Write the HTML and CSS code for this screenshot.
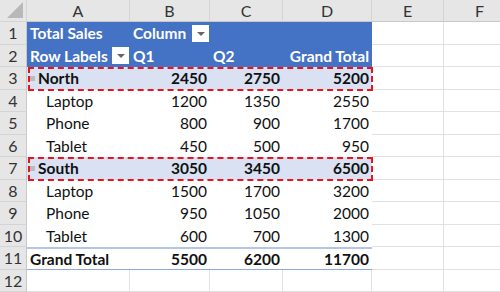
FILE: index.html
```html
<!DOCTYPE html>
<html>
  <head>
    <title>Sales Pivot</title>
    <link rel="stylesheet" href="styles.css">
  </head>
  <body>
    <div class="sheet">
      <div class="row head">
        <div class="corner"><span class="tri"></span></div>
        <div class="colhead">A</div>
        <div class="colhead">B</div>
        <div class="colhead">C</div>
        <div class="colhead">D</div>
        <div class="colhead">E</div>
        <div class="colhead">F</div>
      </div>

      <div class="row">
        <div class="num">1</div>
        <div class="cell blue">Total Sales</div>
        <div class="cell blue">Column <span class="drop"></span></div>
        <div class="cell blue"></div>
        <div class="cell blue"></div>
        <div class="cell grid"></div>
        <div class="cell grid"></div>
      </div>
      <div class="row">
        <div class="num">2</div>
        <div class="cell blue">Row Labels <span class="drop"></span></div>
        <div class="cell blue">Q1</div>
        <div class="cell blue">Q2</div>
        <div class="cell blue right">Grand Total</div>
        <div class="cell grid"></div>
        <div class="cell grid"></div>
      </div>

      <div class="row">
        <div class="num">3</div>
        <div class="cell band label"><span class="minus"></span>North</div>
        <div class="cell band right bold">2450</div>
        <div class="cell band right bold">2750</div>
        <div class="cell band right bold">5200</div>
        <div class="cell grid"></div>
        <div class="cell grid"></div>
        <div class="mark"></div>
      </div>
      <div class="row">
        <div class="num">4</div>
        <div class="cell item">Laptop</div>
        <div class="cell right">1200</div>
        <div class="cell right">1350</div>
        <div class="cell right">2550</div>
        <div class="cell grid"></div>
        <div class="cell grid"></div>
      </div>
      <div class="row">
        <div class="num">5</div>
        <div class="cell item">Phone</div>
        <div class="cell right">800</div>
        <div class="cell right">900</div>
        <div class="cell right">1700</div>
        <div class="cell grid"></div>
        <div class="cell grid"></div>
      </div>
      <div class="row">
        <div class="num">6</div>
        <div class="cell item">Tablet</div>
        <div class="cell right">450</div>
        <div class="cell right">500</div>
        <div class="cell right">950</div>
        <div class="cell grid"></div>
        <div class="cell grid"></div>
      </div>

      <div class="row">
        <div class="num">7</div>
        <div class="cell band label"><span class="minus"></span>South</div>
        <div class="cell band right bold">3050</div>
        <div class="cell band right bold">3450</div>
        <div class="cell band right bold">6500</div>
        <div class="cell grid"></div>
        <div class="cell grid"></div>
        <div class="mark"></div>
      </div>
      <div class="row">
        <div class="num">8</div>
        <div class="cell item">Laptop</div>
        <div class="cell right">1500</div>
        <div class="cell right">1700</div>
        <div class="cell right">3200</div>
        <div class="cell grid"></div>
        <div class="cell grid"></div>
      </div>
      <div class="row">
        <div class="num">9</div>
        <div class="cell item">Phone</div>
        <div class="cell right">950</div>
        <div class="cell right">1050</div>
        <div class="cell right">2000</div>
        <div class="cell grid"></div>
        <div class="cell grid"></div>
      </div>
      <div class="row">
        <div class="num">10</div>
        <div class="cell item">Tablet</div>
        <div class="cell right">600</div>
        <div class="cell right">700</div>
        <div class="cell right">1300</div>
        <div class="cell grid"></div>
        <div class="cell grid"></div>
      </div>

      <div class="row">
        <div class="num">11</div>
        <div class="cell total bold">Grand Total</div>
        <div class="cell total right bold">5500</div>
        <div class="cell total right bold">6200</div>
        <div class="cell total right bold">11700</div>
        <div class="cell grid"></div>
        <div class="cell grid"></div>
      </div>
      <div class="row">
        <div class="num">12</div>
        <div class="cell grid"></div>
        <div class="cell grid"></div>
        <div class="cell grid"></div>
        <div class="cell grid"></div>
        <div class="cell grid"></div>
        <div class="cell grid"></div>
      </div>
    </div>
  </body>
</html>
```

FILE: styles.css
```css
body {
  margin: 0;
  background: #fff;
  font-family: Lato, "Open Sans", sans-serif;
  font-size: 15.5px;
  color: #111;
  overflow: hidden;
}

.sheet {
  width: 520px;
}

.row {
  display: grid;
  grid-template-columns: 27px 103px 80px 73px 89px 72px 72px;
  grid-template-rows: 100%;
  height: 22.5px;
}
.row.head {
  height: 22px;
}
.row > * {
  grid-row: 1;
}
.row > :nth-child(1) { grid-column: 1; }
.row > :nth-child(2) { grid-column: 2; }
.row > :nth-child(3) { grid-column: 3; }
.row > :nth-child(4) { grid-column: 4; }
.row > :nth-child(5) { grid-column: 5; }
.row > :nth-child(6) { grid-column: 6; }
.row > :nth-child(7) { grid-column: 7; }

.corner {
  background: #e6e6e6;
  border-right: 1px solid #d4d4d4;
  border-bottom: 1px solid #d4d4d4;
  display: flex;
  align-items: flex-end;
  justify-content: flex-end;
  padding: 0 3px 3px 0;
}
.tri {
  width: 0;
  height: 0;
  border-left: 16px solid transparent;
  border-bottom: 16px solid #b8b8b8;
}

.colhead {
  background: #e6e6e6;
  color: #333;
  font-size: 16px;
  text-align: center;
  line-height: 21px;
  border-right: 1px solid #d4d4d4;
  border-bottom: 1px solid #c8c8c8;
}

.num {
  background: #e6e6e6;
  color: #333;
  font-size: 16px;
  text-align: center;
  line-height: 22px;
  border-bottom: 1px solid #d4d4d4;
  border-right: 1px solid #c8c8c8;
}

.cell {
  display: flex;
  align-items: center;
  padding: 0 3px;
  white-space: nowrap;
  overflow: hidden;
}
.cell.grid {
  border-right: 1px solid #e1e1e1;
  border-bottom: 1px solid #e1e1e1;
}
.right {
  justify-content: flex-end;
}
.bold {
  font-weight: 700;
}

.blue {
  background: #4472c4;
  color: #fff;
  font-weight: 700;
  justify-content: space-between;
}
.blue.right {
  justify-content: flex-end;
}
.drop {
  width: 17px;
  height: 17px;
  background: #fff;
  position: relative;
  flex: none;
  margin-right: -2px;
}
.drop::after {
  content: "";
  position: absolute;
  left: 5px;
  top: 7px;
  border-left: 4px solid transparent;
  border-right: 4px solid transparent;
  border-top: 4px solid #666;
}

.band {
  background: #d9e1f2;
}
.label {
  font-weight: 700;
  padding-left: 3px;
}
.minus {
  width: 5px;
  height: 5px;
  background: #bbb;
  margin-right: 3px;
  flex: none;
}
.item {
  padding-left: 19px;
}

.total {
  border-top: 2px solid #b4c6e7;
  border-bottom: 1px solid #8ea9db;
}

.row > .mark {
  grid-column: 2 / 6;
  margin: 0 -1px -1px 1px;
  border: 2px dashed #e8141c;
  pointer-events: none;
}
```
